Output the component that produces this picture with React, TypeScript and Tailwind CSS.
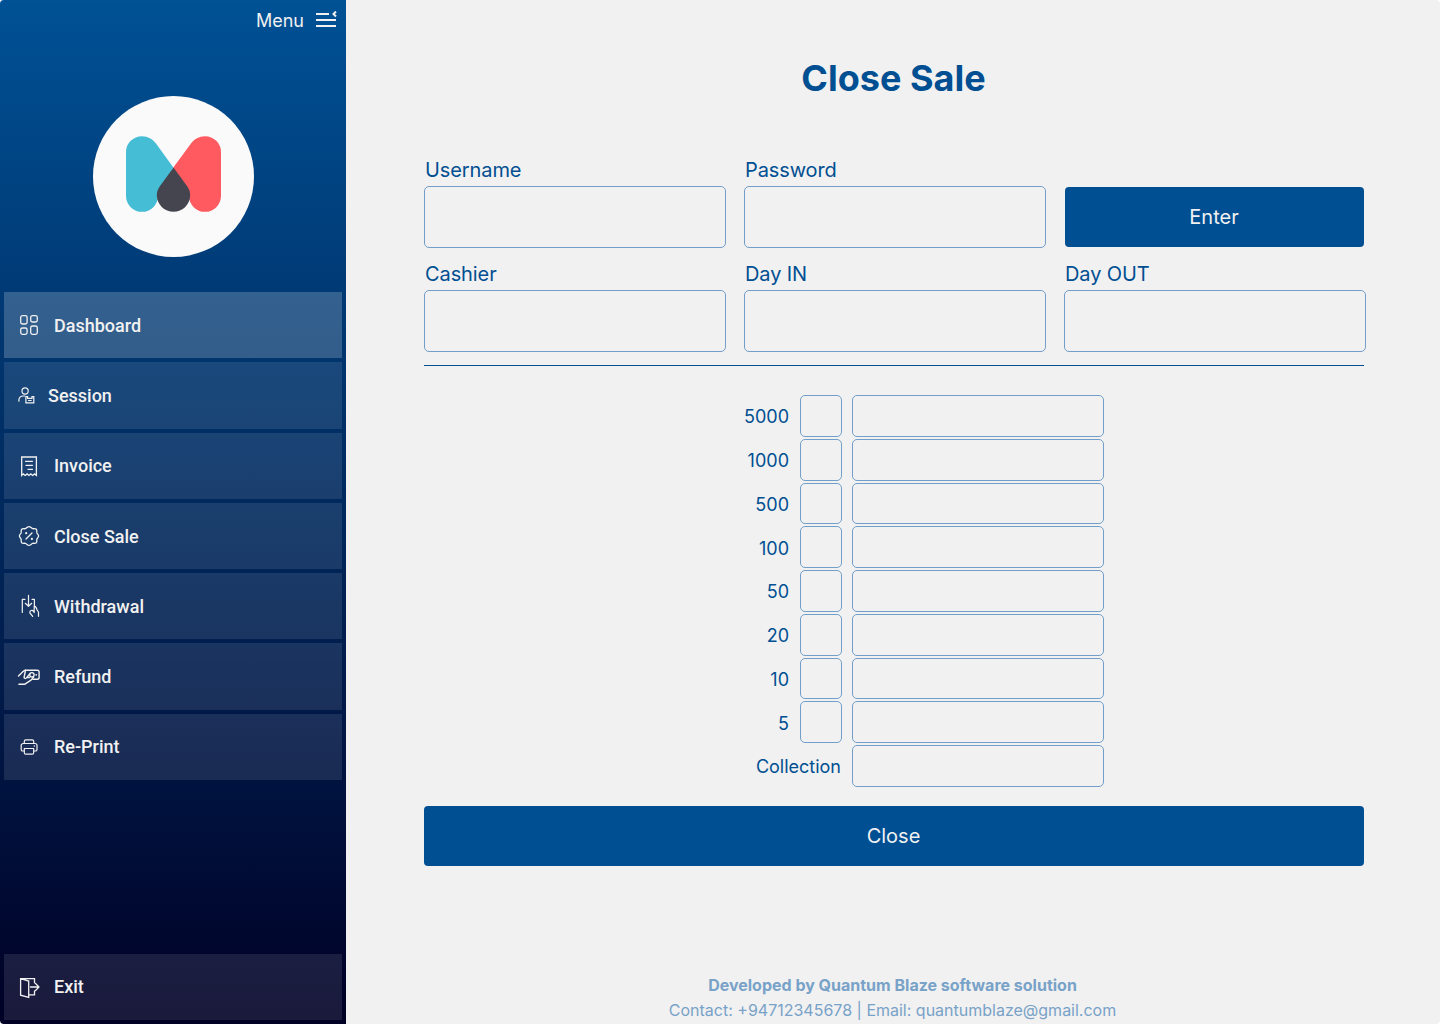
import type { ReactNode } from "react";

const base = {
  fill: "none",
  stroke: "currentColor",
  strokeLinecap: "round" as const,
  strokeLinejoin: "round" as const,
};

function Icon({ children, sw = 1.3 }: { children: ReactNode; sw?: number }) {
  return (
    <svg width="26" height="26" viewBox="0 0 26 26" {...base} strokeWidth={sw} className="shrink-0">
      {children}
    </svg>
  );
}

const DashboardIcon = () => (
  <Icon>
    <rect x="4.7" y="3.6" width="6.4" height="8.4" rx="1.8" />
    <rect x="14.7" y="3.6" width="6.6" height="6.4" rx="1.8" />
    <rect x="4.7" y="16" width="6.4" height="6.4" rx="1.8" />
    <rect x="14.7" y="14" width="6.600" height="8.4" rx="1.8" />
  </Icon>
);

const SessionIcon = () => (
  <Icon sw={1.2}>
    <circle cx="9.1" cy="9" r="3.1" />
    <path d="M2.900 19.200v-1.200a4 4 0 0 1 4-4h2" />
    <path d="M9.900 20.900v-6.300h1.700v1.800h4.400v-1.800h1.800v6.300z" strokeLinejoin="miter" />
    <path d="M12.500 18.500h2.700" />
  </Icon>
);

const InvoiceIcon = () => (
  <Icon>
    <path d="M5.700 22.400V4h14.700v18.400l-1.800-1.500-1.900 1.500-1.900-1.500L13 22.400l-1.900-1.500-1.900 1.500-1.900-1.500z" strokeLinejoin="miter" />
    <path d="M9.500 8.300h7M11 12.300h5.500M9.500 8.300h7M10 12.300h6.500M12 16.300h4.500" />
  </Icon>
);

const CloseSaleIcon = () => (
  <Icon>
    <path d="M13 3.600c1.500 0 2.200 1.600 3.600 2 1.500.4 2.700-.3 3.700.6 1 1 .2 2.300.6 3.700.4 1.200 1.700 1.800 1.700 3.100s-1.300 1.900-1.700 3.100c-.4 1.400.4 2.700-.6 3.700-1 .9-2.300.2-3.700.6-1.400.4-2.100 2-3.600 2s-2.200-1.600-3.600-2c-1.400-.4-2.700.3-3.700-.6-1-1-.2-2.300-.6-3.700-.4-1.200-1.700-1.800-1.700-3.100s1.300-1.900 1.700-3.100c.4-1.400-.4-2.700.6-3.700 1-.9 2.300-.2 3.700-.6 1.400-.4 2.100-2 3.600-2z" />
    <path d="M16 10l-6 6" />
    <path d="M10.200 10.200h.01M15.900 15.900h.01" strokeWidth="2.200" />
  </Icon>
);

const WithdrawalIcon = () => (
  <Icon sw={1.2}>
    <path d="M9 6.300H6.300v13.200M16 6.300h2.400v6.500" />
    <path d="M12.500 2.300v10.900M9.300 10.300l3.200 3 3.200-3" />
    <path d="M18.200 17.800v-4.700c1.500.2 2.200 1.500 2.700 3.400l1.600 2.700v4.100M18.200 16v3.600M17.600 18.600c-1-1.900-4-1.200-3.800.8.100 1.500 2.200 2.300 2.900 4" />
  </Icon>
);

const RefundIcon = () => (
  <Icon sw={1.4}>
    <path d="M9.300 6.200h12a1.800 1.800 0 0 1 1.800 1.800v5.400a1.800 1.800 0 0 1-1.800 1.800h-4.500" />
    <path d="M2.500 11.900l4.300-4.200 2.500-1.500M2.900 20.300h5.600l6.500-4.200 2.600-3" />
    <path d="M9.300 7.500L8.100 13.200c0 1.300 1.400 1.700 2.300.7l3.300-4M11.500 13.500h1.800" />
    <circle cx="15.900" cy="10.800" r="2.200" />
    <path d="M20.200 10.800h.01" strokeWidth="1.800" />
  </Icon>
);

const PrintIcon = () => (
  <Icon sw={1.2}>
    <path d="M8.300 9.500V7.300a1.500 1.500 0 0 1 1.500-1.500h6.400a1.500 1.500 0 0 1 1.500 1.500v2.200" />
    <path d="M8.300 17H6.800a1.600 1.600 0 0 1-1.600-1.600v-3.900a2 2 0 0 1 2-2h11.800a2 2 0 0 1 2 2v3.900a1.600 1.600 0 0 1-1.600 1.600h-1.700" />
    <path d="M8.300 14.500h9.400v4.200a1.500 1.500 0 0 1-1.500 1.500H9.800a1.500 1.500 0 0 1-1.500-1.500z" />
    <path d="M18.300 12h.01" strokeWidth="1.500" />
  </Icon>
);

const ExitIcon = () => (
  <Icon>
    <path d="M18.500 8.800V4.700H4.600v16.500l8.100 2.100V7L4.600 4.700M12.700 20.900h5.800v-4" strokeLinejoin="miter" />
    <path d="M14.500 13h8.500M19.500 9.500L23 13l-3.500 3.500" />
  </Icon>
);

const items = [
  { label: "Dashboard", icon: <DashboardIcon />, active: true },
  { label: "Session", icon: <SessionIcon />, tight: true },
  { label: "Invoice", icon: <InvoiceIcon /> },
  { label: "Close Sale", icon: <CloseSaleIcon /> },
  { label: "Withdrawal", icon: <WithdrawalIcon /> },
  { label: "Refund", icon: <RefundIcon /> },
  { label: "Re-Print", icon: <PrintIcon /> },
];

function NavItem({ label, icon, active, tight }: { label: string; icon: ReactNode; active?: boolean; tight?: boolean }) {
  return (
    <button
      className={`flex h-[66.3px] w-full shrink-0 items-center pl-3 font-[Roboto,sans-serif] text-[18px] font-medium text-[#f1f1f1] ${
        active ? "bg-white/20" : "bg-white/10"
      } ${tight ? "gap-[6px]" : "gap-[12px]"}`}
    >
      {icon}
      <span>{label}</span>
    </button>
  );
}

function Logo() {
  return (
    <div className="flex size-[161px] justify-center rounded-full bg-[#fafafa] pt-[39.5px]">
      <svg width="95" height="76" viewBox="126 149 285 227">
        <path d="M126 197A48 48 0 0 1 174 149C192 149 206 158 216 171L268 243L222 328A48 48 0 0 1 126 328Z" fill="#45bdd5" />
        <path d="M411 197A48 48 0 0 0 363 149C345 149 331 158 321 171L268 243L315 328A48 48 0 0 0 411 328Z" fill="#ff5a5f" />
        <path d="M268.500 243L310 300C316 309 318.500 317 318.500 326A50 50 0 0 1 218.500 326C218.500 317 221 309 227 300Z" fill="#454550" />
      </svg>
    </div>
  );
}

function Field({ label }: { label: string }) {
  return (
    <label className="flex flex-col">
      <span className="pl-px text-[20px] leading-8 tracking-[-0.1px]">{label}</span>
      <input className="h-[62px] w-[302px] rounded-[5px] border border-[#729fca]" />
    </label>
  );
}

const notes = ["5000", "1000", "500", "100", "50", "20", "10", "5"];

export default function App() {
  return (
    <div className="h-[1024px] w-[1440px] bg-white font-[Inter,sans-serif]">
      <div className="flex h-full overflow-hidden rounded-[4px] bg-[#f1f1f1]">
        <aside className="flex w-[346px] shrink-0 flex-col bg-linear-to-b/srgb from-[#005195] to-[#000025] px-1 pb-1">
          <div className="flex h-10 items-center justify-end gap-[11px] pr-[5px] text-[18px] text-[#f1f1f1]">
            <span>Menu</span>
            <svg width="22" height="18" viewBox="0 0 22 18" fill="none" stroke="currentColor" strokeWidth="2">
              <path d="M1 3h13M1 9h20M1 15h20" />
              <path d="M21 .500l-2.500 2.500 2.500 2.500" />
            </svg>
          </div>
          <div className="mt-14 flex justify-center pl-px">
            <Logo />
          </div>
          <nav className="mt-[35px] flex flex-col gap-1">
            {items.map((item) => (
              <NavItem key={item.label} {...item} />
            ))}
          </nav>
          <div className="mt-auto">
            <NavItem label="Exit" icon={<ExitIcon />} />
          </div>
        </aside>

        <main className="flex flex-1 flex-col pr-[74px] pl-[78px] text-[#004f92]">
          <h1 className="mt-[54px] pr-[3px] text-center text-[36px] leading-[48px] font-bold">Close Sale</h1>
          <div className="mt-[52px] grid grid-cols-[302px_302px_302px] gap-x-[18px] gap-y-[10px]">
            <Field label="Username" />
            <Field label="Password" />
            <button className="mr-0.5 mb-px ml-px h-[60px] self-end rounded-[4px] bg-[#004f92] pr-px text-[20px] text-[#f1f1f1]">
              Enter
            </button>
            <Field label="Cashier" />
            <Field label="Day IN" />
            <Field label="Day OUT" />
          </div>
          <hr className="mt-[13px] mr-0.5 border-[#004f92]" />

          <div className="mt-[29px] ml-[300px] flex flex-col gap-0.5 text-[18px]">
            {notes.map((note) => (
              <div key={note} className="flex h-[41.75px] items-center">
                <span className="w-[65px] pt-0.5 text-right">{note}</span>
                <input className="ml-[11px] h-full w-[42px] rounded-[5px] border border-[#729fca]" />
                <input className="ml-[10px] h-full w-[252px] rounded-[5px] border border-[#729fca]" />
              </div>
            ))}
            <div className="flex h-[41.75px] items-center">
              <span className="w-[117px] pt-0.5 text-right">Collection</span>
              <input className="ml-[11px] h-full w-[252px] rounded-[5px] border border-[#729fca]" />
            </div>
          </div>

          <button className="mt-[19px] mr-0.5 h-[60px] rounded-[4px] bg-[#004f92] pr-px text-[20px] text-[#f1f1f1]">
            Close
          </button>

          <footer className="mt-auto pr-[5px] pb-px text-center text-[16px] leading-[25px] text-[#78a2c8]">
            <p className="font-bold">Developed by Quantum Blaze software solution</p>
            <p>Contact: +94712345678 | Email: quantumblaze@gmail.com</p>
          </footer>
        </main>
      </div>
    </div>
  );
}
